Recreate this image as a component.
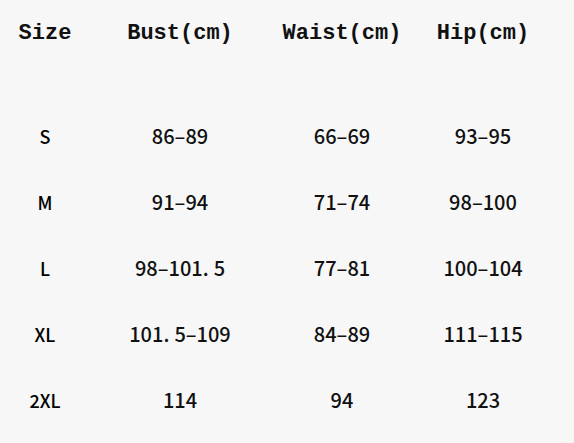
import React from 'react';

const rows: [string, string, string, string][] = [
    ['S', '86–89', '66–69', '93–95'],
    ['M', '91–94', '71–74', '98–100'],
    ['L', '98–101.5', '77–81', '100–104'],
    ['XL', '101.5–109', '84–89', '111–115'],
    ['2XL', '114', '94', '123'],
];

const cols = 'grid grid-cols-[90px_180px_144px_138px]';

// the source renders "." as a wide glyph, so give it some room
const withDot = (v: string) => {
    const i = v.indexOf('.');
    if (i < 0) return v;
    return (
        <>
            {v.slice(0, i)}
            <span className="mr-[5px]">.</span>
            {v.slice(i + 1)}
        </>
    );
};

export default function App() {
    return (
        <div className="w-[574px] h-[443px] bg-[#f7f7f7] text-[#111111] overflow-hidden">
            <div className={`${cols} h-[66px] items-center font-['Liberation_Mono',monospace] font-bold text-[22px]`}>
                <div className="text-center">Size</div>
                <div className="text-center">Bust(cm)</div>
                <div className="text-center">Waist(cm)</div>
                <div className="text-center">Hip(cm)</div>
            </div>
            <div className="mt-[37px]">
                {rows.map((r) => (
                    <div key={r[0]} className={`${cols} h-[66px] items-center font-['Noto_Sans_CJK_SC','Noto_Sans',sans-serif] text-[20px] leading-none font-medium`}>
                        <div className="text-center text-[18px] text-black">{r[0]}</div>
                        <div className="text-center">{withDot(r[1])}</div>
                        <div className="text-center">{r[2]}</div>
                        <div className="text-center">{r[3]}</div>
                    </div>
                ))}
            </div>
        </div>
    );
}
